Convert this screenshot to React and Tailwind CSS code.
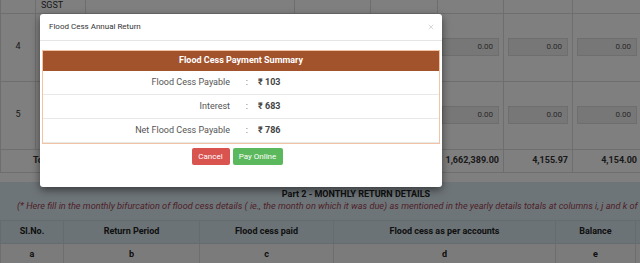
import { X } from 'lucide-react';

const summary = [
  { label: 'Flood Cess Payable', value: '₹ 103' },
  { label: 'Interest', value: '₹ 683' },
  { label: 'Net Flood Cess Payable', value: '₹ 786' },
];

function AmountInput() {
  return (
    <div className="h-[18px] bg-[#eeeeee] border border-[#dddddd] flex items-center justify-end pr-[5px] text-[8px] text-[#555]">
      0.00
    </div>
  );
}

function TopTable() {
  const cell = 'border border-[#dddddd] p-0';
  return (
    <div className="-mt-[12px]">
      <table className="table-fixed border-collapse w-[641px] text-[9px] text-[#333]">
        <colgroup>
          <col className="w-[35px]" />
          <col className="w-[50px]" />
          <col className="w-[209px]" />
          <col className="w-[76px]" />
          <col className="w-[67px]" />
          <col className="w-[66px]" />
          <col className="w-[69px]" />
          <col className="w-[69px]" />
        </colgroup>
        <tbody>
          <tr className="h-[24px]">
            <td className={cell} />
            <td className={`${cell} align-top pt-[10px] pl-[5px]`}>SGST</td>
            <td className={cell} />
            <td className={cell} />
            <td className={cell} />
            <td className={cell} />
            <td className={cell} />
            <td className={cell} />
          </tr>
          {['4', '5'].map((n) => (
            <tr key={n} className="h-[68px]">
              <td className={`${cell} text-center`}>{n}</td>
              <td className={cell} />
              <td className={cell} />
              <td className={cell} />
              <td className={cell} />
              <td className={`${cell} px-[4px]`}><AmountInput /></td>
              <td className={`${cell} px-[4px]`}><AmountInput /></td>
              <td className={`${cell} px-[4px]`}><AmountInput /></td>
            </tr>
          ))}
          <tr className="h-[23px] font-bold text-[9px]">
            <td colSpan={2} className={`${cell} text-center`}>Total</td>
            <td className={cell} />
            <td className={cell} />
            <td className={cell} />
            <td className={`${cell} text-right pr-[4px]`}>1,662,389.00</td>
            <td className={`${cell} text-right pr-[4px]`}>4,155.97</td>
            <td className={`${cell} text-right pr-[4px]`}>4,154.00</td>
          </tr>
        </tbody>
      </table>
      <div className="h-[9px]" />
    </div>
  );
}

function MonthlySection() {
  const head = 'border border-[#c9d8de] font-bold text-center p-0';
  return (
    <section className="w-[712px] bg-[#dcebf1] pt-[6px]">
      <h3 className="text-center font-bold text-[9px] leading-[12px] text-[#222]">
        Part 2 - MONTHLY RETURN DETAILS
      </h3>
      <p className="whitespace-nowrap italic text-[9.2px] leading-[12px] pl-[17px] text-[#9c3f52]">
        (* Here fill in the monthly bifurcation of flood cess details ( ie., the month on which it was due) as mentioned in the yearly details totals at columns i, j and k of
      </p>
      <table className="mt-[8px] table-fixed border-collapse w-[712px] text-[9px] text-[#222]">
        <colgroup>
          <col className="w-[63px]" />
          <col className="w-[136px]" />
          <col className="w-[134px]" />
          <col className="w-[222px]" />
          <col className="w-[80px]" />
          <col className="w-[77px]" />
        </colgroup>
        <tbody>
          <tr className="h-[23px] bg-[#d6e6ec]">
            <td className={head}>Sl.No.</td>
            <td className={head}>Return Period</td>
            <td className={head}>Flood cess paid</td>
            <td className={head}>Flood cess as per accounts</td>
            <td className={head}>Balance</td>
            <td className={head} />
          </tr>
          <tr className="h-[23px] bg-[#f7f7f7]">
            {['a', 'b', 'c', 'd', 'e', ''].map((l, i) => (
              <td key={i} className="border border-[#dddddd] text-center font-bold">{l}</td>
            ))}
          </tr>
        </tbody>
      </table>
    </section>
  );
}

function PaymentModal() {
  return (
    <div className="absolute left-[40px] top-[14px] w-[402px] h-[173px] bg-white rounded-[3px] shadow-[0_3px_9px_rgba(0,0,0,0.5)]">
      <div className="h-[27px] flex items-center justify-between pl-[9px] pr-[7px] border-b border-[#e5e5e5]">
        <span className="text-[8px] text-[#333]">Flood Cess Annual Return</span>
        <X size={8} strokeWidth={2} className="text-[#c4c4c4]" />
      </div>
      <div className="px-[2px] pt-[9px]">
        <div className="border border-[#f2c4a6]">
          <div className="h-[20px] bg-[#a3532b] flex items-center justify-center text-white font-bold text-[9px]">
            Flood Cess Payment Summary
          </div>
          {summary.map((row) => (
            <div key={row.label} className="h-[24px] flex items-center border-b border-[#e8e8e8] text-[9px]">
              <span className="w-[187px] text-right text-[#555]">{row.label}</span>
              <span className="w-[18px] text-right text-[#555]">:</span>
              <span className="pl-[10px] font-bold text-[#444]">{row.value}</span>
            </div>
          ))}
        </div>
        <div className="flex justify-center gap-[3px] pt-[4px] pr-[8px]">
          <button className="h-[17px] w-[38px] bg-[#d9534f] text-white text-[8px] rounded-[2px]">Cancel</button>
          <button className="h-[17px] w-[50px] bg-[#5cb85c] text-white text-[8px] rounded-[2px]">Pay Online</button>
        </div>
      </div>
    </div>
  );
}

export default function App() {
  return (
    <div className="relative w-[640px] h-[263px] overflow-hidden bg-white font-['Roboto',sans-serif]">
      <TopTable />
      <MonthlySection />
      <div className="absolute inset-0 bg-black/50">
        <PaymentModal />
      </div>
    </div>
  );
}
